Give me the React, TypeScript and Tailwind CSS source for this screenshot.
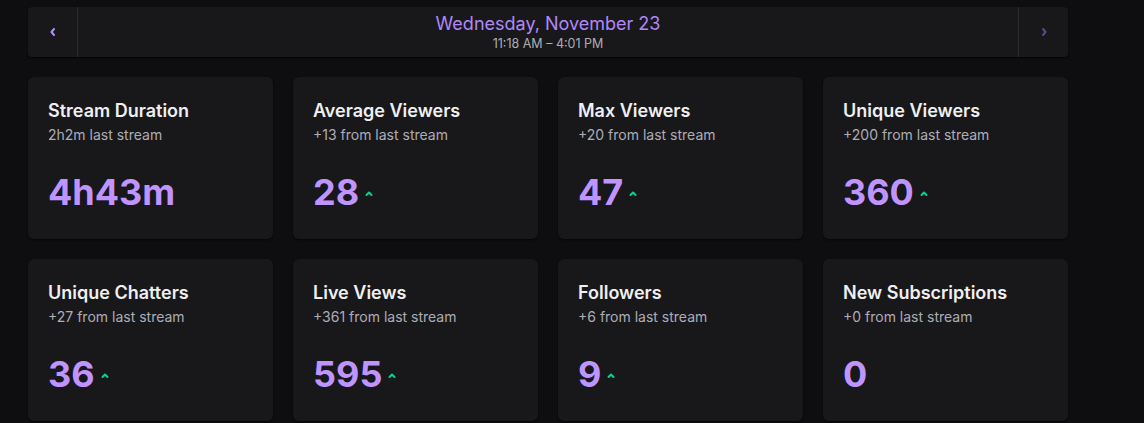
const stats = [
  { title: "Stream Duration", sub: "2h2m last stream", value: "4h43m", up: false },
  { title: "Average Viewers", sub: "+13 from last stream", value: "28", up: true },
  { title: "Max Viewers", sub: "+20 from last stream", value: "47", up: true },
  { title: "Unique Viewers", sub: "+200 from last stream", value: "360", up: true },
  { title: "Unique Chatters", sub: "+27 from last stream", value: "36", up: true },
  { title: "Live Views", sub: "+361 from last stream", value: "595", up: true },
  { title: "Followers", sub: "+6 from last stream", value: "9", up: true },
  { title: "New Subscriptions", sub: "+0 from last stream", value: "0", up: false },
];

function Caret({ dir, size = 10 }: { dir: "left" | "right" | "up"; size?: number }) {
  const d =
    dir === "left" ? "M6 2 L3.5 5 L6 8" : dir === "right" ? "M4 2 L6.5 5 L4 8" : "M2.5 6 L5 3.5 L7.5 6";
  return (
    <svg width={size} height={size} viewBox="0 0 10 10" fill="none">
      <path d={d} stroke="currentColor" strokeWidth="2" strokeLinecap="round" strokeLinejoin="round" />
    </svg>
  );
}

function StatCard({ title, sub, value, up }: (typeof stats)[number]) {
  return (
    <div className="h-[162px] rounded-md bg-[#18181b] px-5 pt-5 shadow-[0_1px_2px_rgba(0,0,0,0.6)]">
      <div className="text-lg font-semibold leading-7 text-[#efeff1]">{title}</div>
      <div className="text-sm leading-5 text-[#adadb8]">{sub}</div>
      <div className="mt-[27px] flex items-center gap-[5px]">
        <span className="text-4xl font-bold leading-10 text-[#bf94ff]">{value}</span>
        {up && (
          <span className="mt-1 text-[#00d68f]">
            <Caret dir="up" />
          </span>
        )}
      </div>
    </div>
  );
}

export default function App() {
  return (
    <div className="min-h-[423px] bg-[#0e0e10] pl-7 pt-[7px] font-['Inter',sans-serif]" style={{ width: 1144 }}>
      <div className="w-[1040px]">
        <div className="flex h-[50px] items-stretch rounded-sm bg-[#18181b] shadow-[0_1px_2px_rgba(0,0,0,0.7)]">
          <button className="flex w-[50px] items-center justify-center border-r border-[#2a2a2e] text-[#b38cff]">
            <Caret dir="left" />
          </button>
          <div className="flex flex-1 flex-col items-center justify-center">
            <div className="text-lg leading-6 text-[#b088f9]">Wednesday, November 23</div>
            <div className="text-[12.5px] leading-4 text-[#adadb8]">11:18 AM – 4:01 PM</div>
          </div>
          <button className="flex w-[50px] items-center justify-center border-l border-[#2a2a2e] text-[#5a4a88]">
            <Caret dir="right" />
          </button>
        </div>
        <div className="mt-5 grid grid-cols-4 gap-5">
          {stats.map((s) => (
            <StatCard key={s.title} {...s} />
          ))}
        </div>
      </div>
    </div>
  );
}
